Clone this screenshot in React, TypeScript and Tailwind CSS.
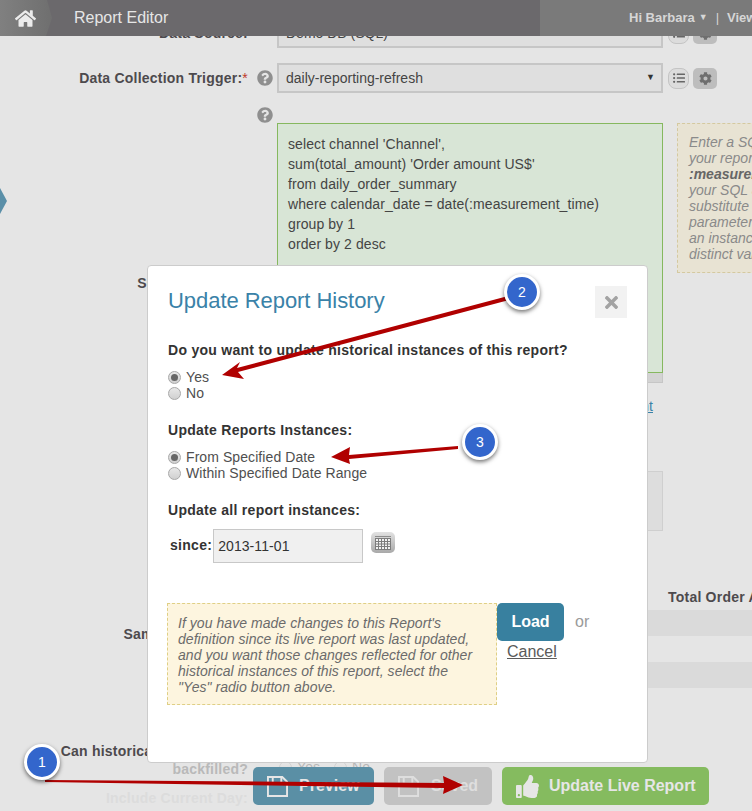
import React from "react";
import { FaHome, FaQuestionCircle, FaListUl, FaCog, FaThumbsUp, FaTimes } from "react-icons/fa";

const labelClass = "text-[14px] font-bold tracking-[0.22px] text-[#4d4a4d]";
const dialogLabel = "text-[14px] font-bold tracking-[0.28px] text-[#333]";

const HelpIcon = () => <FaQuestionCircle size={16} className="text-[#8f8f8f]" />;

const FieldActions = () => (
  <div className="flex items-center gap-[4px] pl-[5px] shrink-0">
    <button className="w-[21px] h-[21px] rounded-[8px] border border-[#c4c4c4] bg-[#dcdcdc] flex items-center justify-center text-[#666]">
      <FaListUl size={12} />
    </button>
    <button className="w-[24px] h-[21px] rounded-[5px] bg-[#bdbdbd] flex items-center justify-center text-[#6e6e6e]">
      <FaCog size={13} />
    </button>
  </div>
);

const Radio = ({ checked, label }: { checked?: boolean; label: string }) => (
  <label className="flex items-center h-[16px] text-[14px] tracking-[0.08px] text-[#4f4f4f]">
    <span className="w-[13px] h-[13px] rounded-full border border-[#a8a8a8] bg-gradient-to-b from-[#e8e8e8] to-[#d0d0d0] flex items-center justify-center mr-[5px] shrink-0">
      {checked && <span className="w-[7px] h-[7px] rounded-full bg-[#666]" />}
    </span>
    {label}
  </label>
);

const SaveIcon = ({ className }: { className: string }) => (
  <svg viewBox="0 0 22 22" className={className} fill="none" stroke="currentColor" strokeWidth="2">
    <path d="M1 1h15l5 5v15H1z" />
    <path d="M6 1v7h9V1" />
  </svg>
);

const CalendarIcon = () => (
  <svg viewBox="0 0 16 14" className="w-[16px] h-[14px]" fill="none" stroke="#7c7c7c" strokeWidth="1">
    <path d="M0.5 0.5h15" strokeDasharray="1 1" stroke="#444" />
    <rect x="0.5" y="2.5" width="15" height="11" fill="#f2f2f2" />
    <path d="M0.5 5.5h15M0.5 8h15M0.5 10.5h15M3.5 2.5v11M6.5 2.5v11M9.5 2.5v11M12.5 2.5v11" />
  </svg>
);

const Callout = ({ n, className }: { n: number; className: string }) => (
  <div
    className={`absolute w-[36px] h-[36px] rounded-full bg-[#3366cc] border-[3px] border-white shadow-[0_2px_4px_rgba(0,0,0,0.55)] flex items-center justify-center text-white text-[14px] ${className}`}
  >
    {n}
  </div>
);

// annotation arrows drawn over the screenshot
const Arrows = () => (
  <svg className="absolute inset-0 w-[752px] h-[811px] pointer-events-none" viewBox="0 0 752 811">
    <g fill="#b00000">
      <path d="M512 295 L513 299 L238 372 L244 379 L222 375 L240 362 L237 368 Z" />
      <path d="M458 446 L458 449 L349 459 L350 464 L331 457 L350 447 L349 455 Z" />
      <path d="M45 780 L444 783 L443 776 L463 785 L443 794 L444 788 L45 782 Z" />
    </g>
  </svg>
);

export default function App() {
  return (
    <div className="relative w-[752px] h-[811px] overflow-hidden bg-[#e5e5e5] font-['Liberation_Sans',Arial,sans-serif]">
      {/* Page behind the dialog */}
      <div className="flex flex-col pt-[18px]">
        <div className="flex items-center h-[30px]">
          <div className={`w-[248px] shrink-0 text-right ${labelClass}`}>Data Source:</div>
          <div className="w-[29px] shrink-0" />
          <div className="w-[386px] shrink-0 h-[30px] border-2 border-[#c6c6c6] bg-[#dfdfdf] pl-[7px] text-[14px] leading-[26px] text-[#444]">
            Demo DB (SQL)
          </div>
          <FieldActions />
        </div>

        <div className="flex items-center h-[30px] mt-[15px]">
          <div className={`w-[248px] shrink-0 text-right ${labelClass}`}>
            Data Collection Trigger:<span className="text-[#c0392b] font-normal">*</span>
          </div>
          <div className="w-[29px] shrink-0 pl-[9px]">
            <HelpIcon />
          </div>
          <div className="w-[386px] shrink-0 h-[30px] border-2 border-[#c6c6c6] bg-[#dfdfdf] pl-[7px] pr-[6px] flex items-center justify-between text-[14px] text-[#444]">
            <span>daily-reporting-refresh</span>
            <span className="text-[9px] text-[#333]">▼</span>
          </div>
          <FieldActions />
        </div>

        <div className="h-[16px] mt-[14px] pl-[257px]">
          <HelpIcon />
        </div>

        <div className="flex">
          <div className={`w-[277px] shrink-0 pr-[32px] pt-[150px] text-right whitespace-nowrap ${labelClass}`}>SQL Statement:</div>
          <div className="w-[386px] shrink-0">
            <div className="h-[250px] bg-[#d8e5d6] border border-[#86b85f] pl-[10px] pt-[10px] text-[14px] leading-[20px] tracking-[0.09px] text-[#444]">
              <div>select channel 'Channel',</div>
              <div>sum(total_amount) 'Order amount US$'</div>
              <div>from daily_order_summary</div>
              <div>where calendar_date = date(:measurement_time)</div>
              <div>group by 1</div>
              <div>order by 2 desc</div>
            </div>
            <div className="h-[10px] bg-[#d3d3d3] border border-t-0 border-[#c6c6c6]" />
            <div className="h-[44px] pt-[13px] text-right pr-[10px] text-[14px] text-[#3a82a8] underline">
              Edit SQL Statement
            </div>
            <div className="h-[60px] mt-[44px] bg-[#dddddd] border border-[#cfcfcf]" />
          </div>
          <div className="ml-[14px] w-[300px] h-[150px] border border-dashed border-[#d4c9a0] bg-[#e8e3d3] pl-[11px] pt-[10px] text-[14px] leading-[16px] italic text-[#8a8a8a] whitespace-nowrap shrink-0">
            <div>Enter a SQL statement for</div>
            <div>your report. You may use</div>
            <div className="font-bold text-[#666]">:measurement_time in</div>
            <div>your SQL and we will</div>
            <div>substitute the</div>
            <div>parameter value for</div>
            <div>an instance with</div>
            <div>distinct values.</div>
          </div>
        </div>

        <div className="flex mt-[57px]">
          <div className={`w-[230px] shrink-0 pt-[36px] text-right whitespace-nowrap ${labelClass}`}>Sample Report:</div>
          <div className="w-[438px] shrink-0" />
          <div className="w-[200px] shrink-0">
            <div className={`h-[22px] leading-[18px] whitespace-nowrap ${labelClass}`}>Total Order Amount</div>
            <div className="h-[26px] -ml-[20px] bg-[#dadada]" />
            <div className="h-[26px]" />
            <div className="h-[26px] -ml-[20px] bg-[#dadada]" />
          </div>
        </div>

        {/* These rows fade out towards the action bar */}
        <div className="flex mt-[54px]">
          <div className="w-[248px] shrink-0 text-right leading-[18px] whitespace-nowrap text-[14px] font-bold tracking-[0.22px] text-[#4d4a4d]">
            Can historical instances be
            <br />
            <span className="text-[#b9b9b9]">backfilled?</span>
          </div>
          <div className="flex items-center gap-[14px] pl-[31px] pt-[20px] h-[30px] opacity-30">
            <Radio label="Yes" />
            <Radio label="No" />
          </div>
        </div>

        <div className="mt-[10px] w-[248px] shrink-0 text-right whitespace-nowrap text-[14px] font-bold tracking-[0.22px] text-[#dcdcdc]">
          Include Current Day:
        </div>
      </div>

      {/* Side handle */}
      <div className="absolute left-0 top-[188px] w-[7px] h-[26px] bg-[#5a8fa8] [clip-path:polygon(0_0,100%_50%,0_100%)]" />

      {/* Action bar */}
      <div className="absolute left-[253px] top-[767px] flex gap-[10px] text-[16px] font-bold text-[#e6e6e6]">
        <button className="w-[121px] h-[38px] rounded-[5px] bg-[#5a8fa5] flex items-center pl-[14px] gap-[11px]">
          <SaveIcon className="w-[21px] h-[21px]" />
          Preview
        </button>
        <button className="w-[108px] h-[38px] rounded-[5px] bg-[#c2c2c2] flex items-center pl-[14px] gap-[12px] text-[#dedede]">
          <SaveIcon className="w-[21px] h-[21px]" />
          Saved
        </button>
        <button className="w-[207px] h-[38px] rounded-[5px] bg-[#85bb5f] flex items-center pl-[14px] gap-[10px]">
          <FaThumbsUp size={23} />
          Update Live Report
        </button>
      </div>

      {/* Top bar */}
      <header className="absolute left-0 top-0 w-[752px] h-[36px] flex bg-[#7a7a7a] text-[#e6e6e6]">
        <div className="w-[52px] shrink-0 h-[36px] pl-[15px] flex items-center bg-gradient-to-r from-[#808080] to-[#6f6f6f] [clip-path:polygon(0_0,47px_0,52px_18px,46px_100%,0_100%)]">
          <FaHome size={21} className="text-[#ececec]" />
        </div>
        <div className="w-[494px] shrink-0 -ml-[6px] pl-[28px] flex items-center bg-[#6b696c] text-[16px]">Report Editor</div>
        <div className="flex-1 flex items-center whitespace-nowrap text-[13px] font-bold text-[#d6d6d6]">
          <span className="pl-[89px]">Hi Barbara</span>
          <span className="text-[9px] pl-[4px]">▼</span>
          <span className="font-normal px-[8px]">|</span>
          <span>View Reports</span>
        </div>
      </header>

      {/* Update history dialog */}
      <div className="absolute left-[147px] top-[265px] w-[501px] h-[498px] bg-white border border-[#cccccc] rounded-[4px] px-[20px]">
        <div className="flex justify-between items-start pt-[20px]">
          <h2 className="text-[22px] leading-[30px] tracking-[-0.05px] text-[#3a82a8]">Update Report History</h2>
          <button className="w-[32px] h-[32px] bg-[#f2f2f2] flex items-center justify-center text-[#a3a3a3]">
            <FaTimes size={19} />
          </button>
        </div>

        <p className={`mt-[24px] leading-[16px] ${dialogLabel}`}>
          Do you want to update historical instances of this report?
        </p>
        <div className="mt-[11px]">
          <Radio checked label="Yes" />
          <Radio label="No" />
        </div>

        <p className={`mt-[21px] leading-[16px] ${dialogLabel}`}>Update Reports Instances:</p>
        <div className="mt-[11px]">
          <Radio checked label="From Specified Date" />
          <Radio label="Within Specified Date Range" />
        </div>

        <p className={`mt-[21px] leading-[16px] ${dialogLabel}`}>Update all report instances:</p>
        <div className="flex items-start mt-[11px] pl-[2px]">
          <span className={`leading-[32px] pr-[1px] ${dialogLabel}`}>since:</span>
          <div className="w-[150px] h-[34px] border border-[#c8c8c8] bg-[#f0f0f0] pl-[4px] text-[14px] leading-[32px] tracking-[0.08px] text-[#333]">
            2013-11-01
          </div>
          <button className="ml-[8px] mt-[3px] w-[24px] h-[21px] rounded-[5px] bg-gradient-to-b from-[#e2e2e2] to-[#a9a9a9] flex items-center justify-center">
            <CalendarIcon />
          </button>
        </div>

        <div className="flex items-start mt-[40px] -ml-[1px]">
          <div className="w-[330px] shrink-0 h-[102px] border border-dashed border-[#dfcf85] bg-[#fdf5df] pl-[10px] pt-[11px] text-[14px] leading-[16px] tracking-[0.05px] italic text-[#6b6b6b] whitespace-nowrap">
            <div>If you have made changes to this Report's</div>
            <div>definition since its live report was last updated,</div>
            <div>and you want those changes reflected for other</div>
            <div>historical instances of this report, select the</div>
            <div>"Yes" radio button above.</div>
          </div>
          <div className="w-[100px] shrink-0">
            <div className="flex items-center">
              <button className="w-[67px] h-[38px] rounded-[5px] bg-[#38809f] text-white text-[16px] font-bold">Load</button>
              <span className="pl-[11px] text-[16px] text-[#9a9a9a]">or</span>
            </div>
            <a className="block pl-[10px] pt-[1px] text-[16px] leading-[20px] underline text-[#5a5a5a]">Cancel</a>
          </div>
        </div>
      </div>

      <Arrows />
      <Callout n={1} className="left-[24px] top-[744px]" />
      <Callout n={2} className="left-[504px] top-[274px]" />
      <Callout n={3} className="left-[462px] top-[424px]" />
    </div>
  );
}
